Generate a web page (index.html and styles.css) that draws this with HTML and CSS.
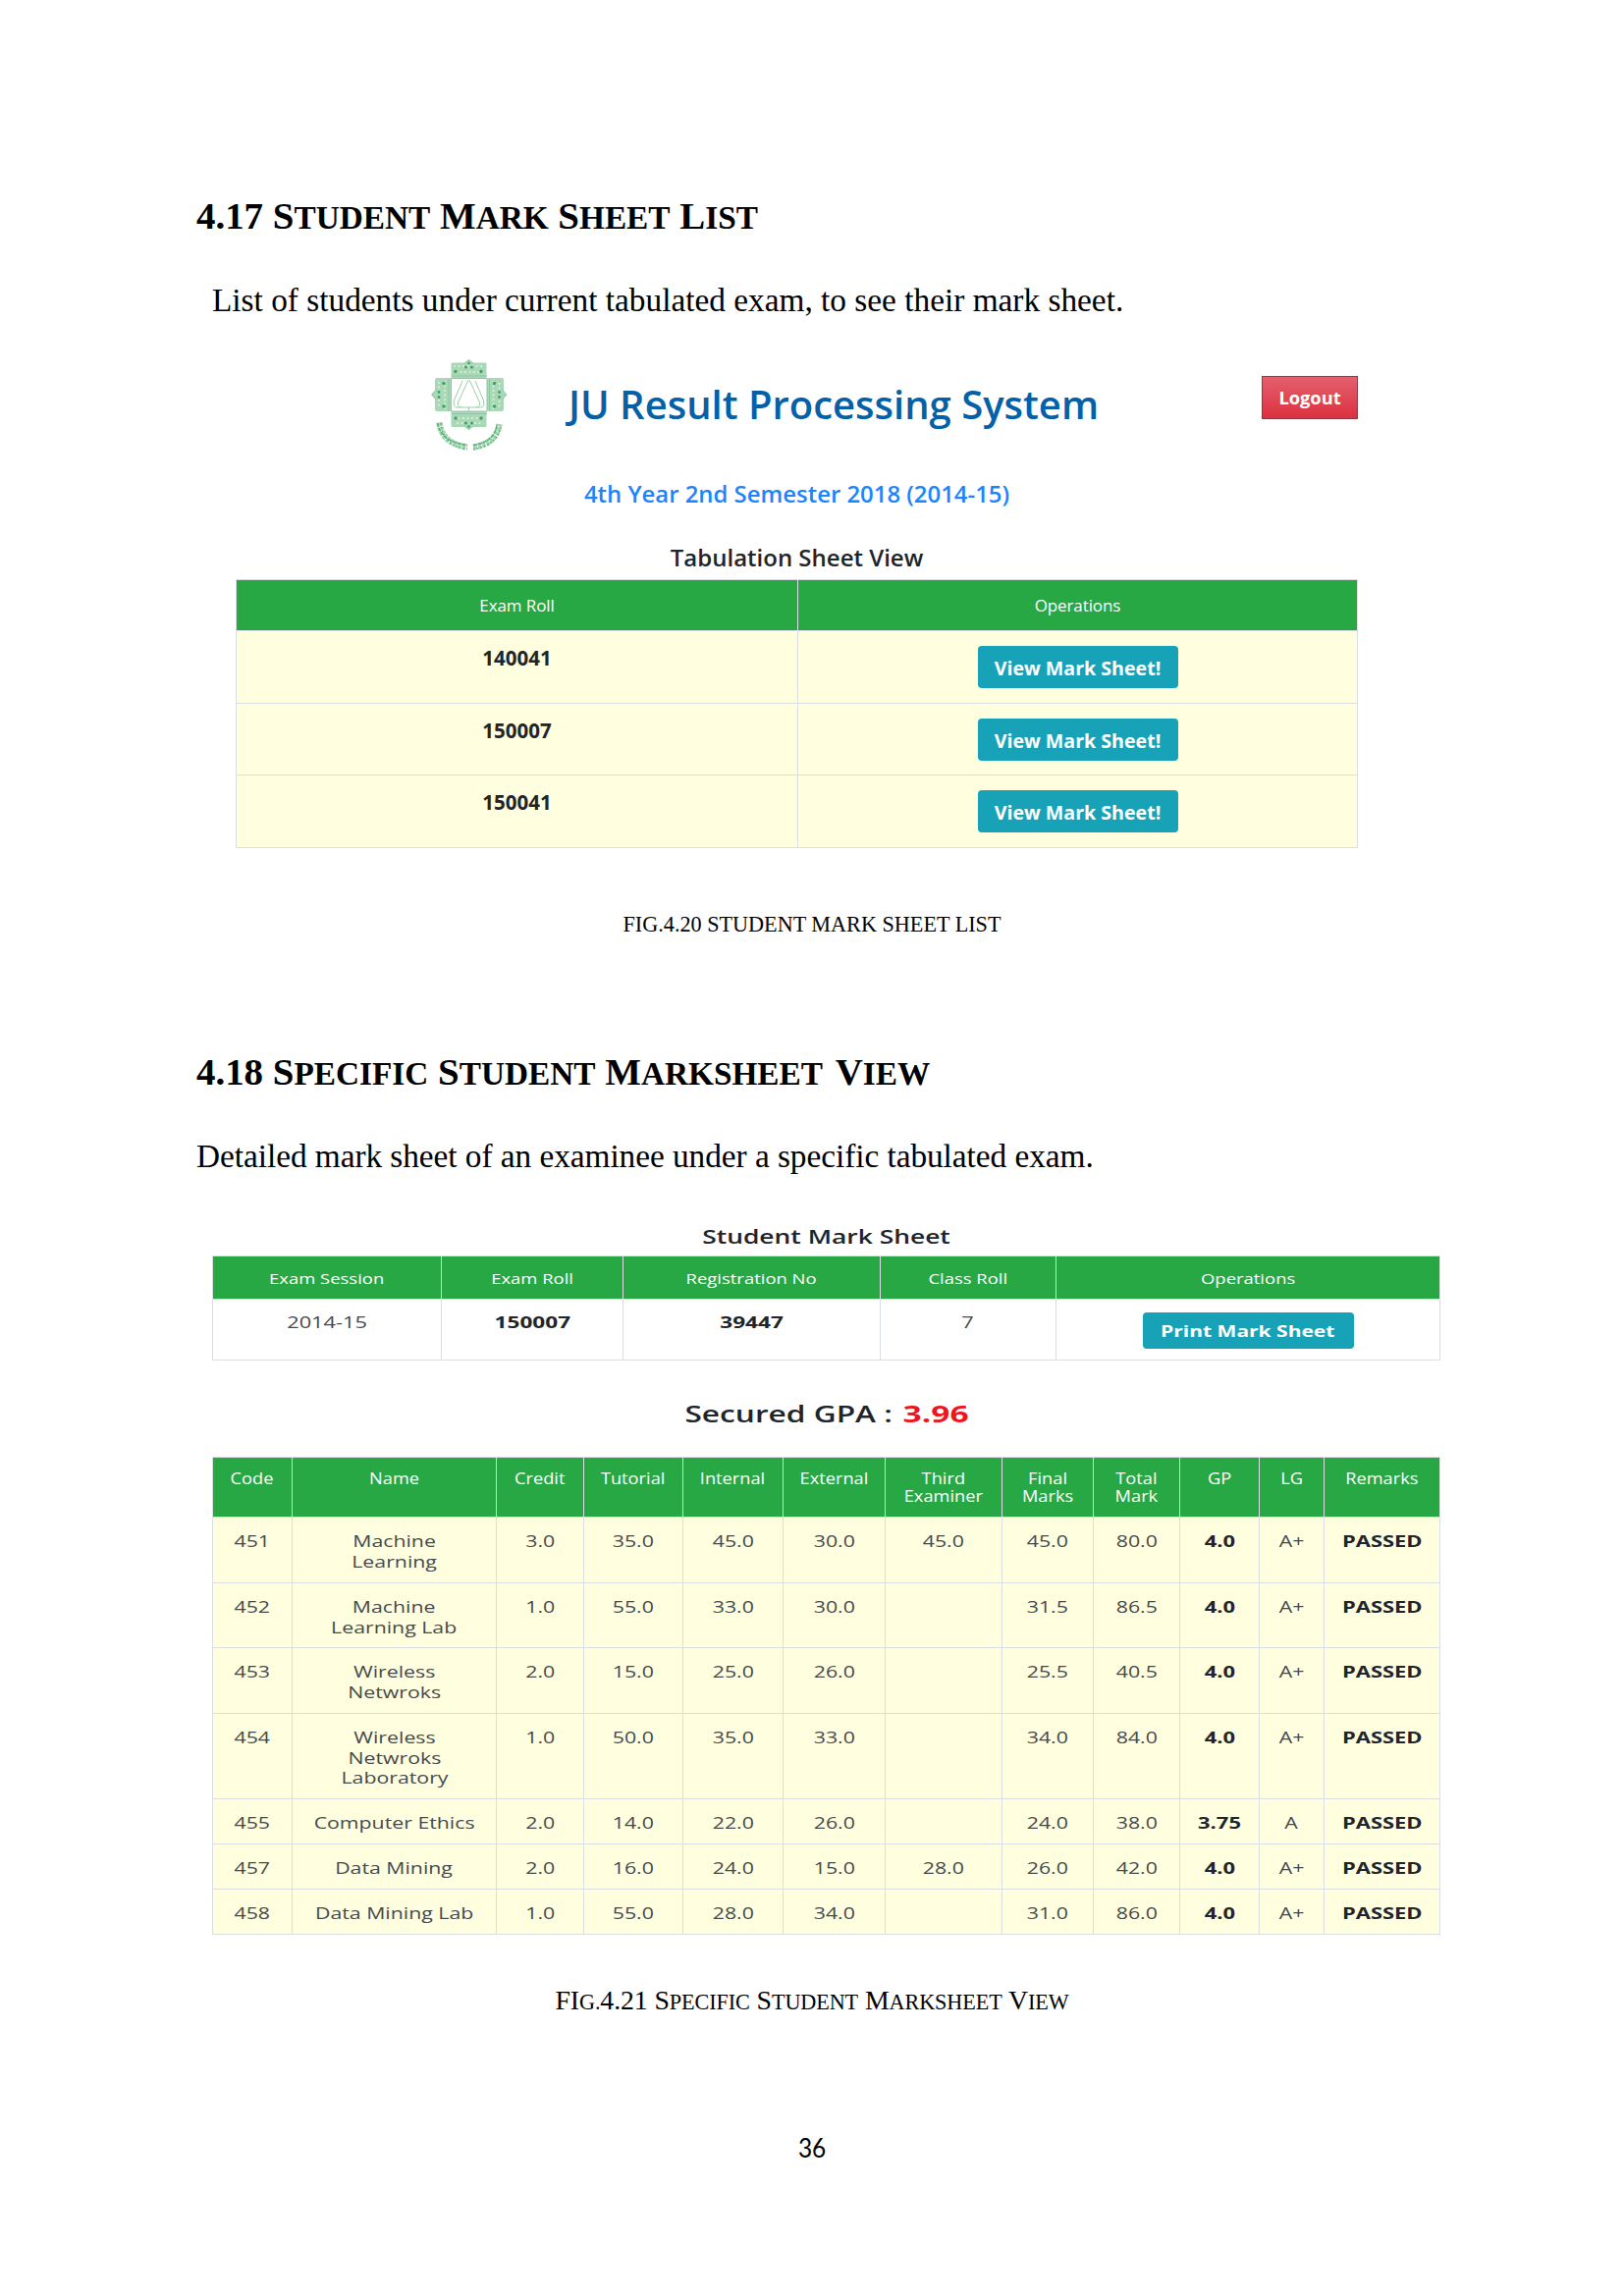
FILE: index.html
```
<!DOCTYPE html>
<html lang="en">
<head>
<meta charset="utf-8">
<title>Student Mark Sheet</title>
<link rel="stylesheet" href="styles.css">
</head>
<body>
<main class="page">
  <h2 class="heading">4.17 S<small>TUDENT</small> M<small>ARK</small> S<small>HEET</small> L<small>IST</small></h2>
  <p class="intro intro-indent">List of students under current tabulated exam, to see their mark sheet.</p>

  <section class="fig fig-list">
    <header class="banner">
      <svg class="logo" viewBox="0 0 78 94" width="78" height="94">
        <g fill="#a9d8b7">
          <rect x="20.5" y="3.5" width="36" height="16" rx="1"/>
          <rect x="20.5" y="53" width="36" height="16" rx="1"/>
          <rect x="4" y="19" width="17" height="34" rx="2"/>
          <rect x="57" y="19" width="17" height="34" rx="2"/>
          <path d="M38.5 0l5 5h-10zM38.5 72l5-5h-10zM0 36l5-5v10zM77.500 36l-5-5v10z"/>
        </g>
        <g fill="none" stroke="#8cc99f" stroke-width="1">
          <path d="M20.500 19.500h36.500v33.500h-36.500zM18 20v33M59.500 20v33M21 17h36M21 55.500h36"/>
          <path d="M5 31l-4 5 4 5M72.500 31l4 5-4 5M34 4l4.500-3.500L43 4M34 68l4.500 3.500L43 68"/>
          <path d="M38.500 53v-4h-9q-3-2-2-5l10-22h2l10 22q1 3-2 5h-9M32 22L23.500 42q-1.500 7 3 7h4M45 22l8.500 20q1.500 7-3 7h-4" stroke-width=".9"/>
        </g>
        <g stroke="#dff1e4" stroke-width="1.500" stroke-dasharray="2 2.500" fill="none">
          <path d="M23 7h31M25 13h28M23 60h31M26 65h26M8 23v27M14 22v29M63.500 22v29M69.500 24v26"/>
        </g>
        <g fill="#3f9f61">
          <circle cx="25" cy="12.500" r="1.700"/><circle cx="51" cy="12.500" r="1.700"/>
          <circle cx="35.500" cy="8" r="1.500"/><circle cx="41.500" cy="8" r="1.500"/><circle cx="38.500" cy="4" r="1.300"/>
          <circle cx="25" cy="60" r="1.700"/><circle cx="51" cy="60" r="1.700"/>
          <circle cx="35.500" cy="65" r="1.500"/><circle cx="41.500" cy="65" r="1.500"/><circle cx="38.500" cy="68.500" r="1.300"/>
          <circle cx="13" cy="24.500" r="1.700"/><circle cx="13" cy="48" r="1.700"/>
          <circle cx="8" cy="33.500" r="1.400"/><circle cx="8" cy="38.500" r="1.400"/>
          <circle cx="64.500" cy="24.500" r="1.700"/><circle cx="64.500" cy="48" r="1.700"/>
          <circle cx="69.500" cy="33.500" r="1.400"/><circle cx="69.500" cy="38.500" r="1.400"/>
        </g>
        <g fill="none">
          <path d="M8.500 64.500Q11 86 37 89.500M43 89.500Q67 86 69.500 66" stroke="#a5d6b4" stroke-width="6.500" stroke-dasharray="3.600 .9"/>
          <path d="M6.500 65Q10 84 37 87.500M43 87.500Q65 84 67 67" stroke="#58ae76" stroke-width="1.400" stroke-dasharray="4 1"/>
          <path d="M10 65Q12 88 37 91.500M43 91.500Q68 88 71 67" stroke="#5fb27b" stroke-width="1.600" stroke-dasharray="1.500 2.200"/>
        </g>
      </svg>
      <h1 class="brand">JU Result Processing System</h1>
      <button class="logout">Logout</button>
    </header>
    <h3 class="exam">4th Year 2nd Semester 2018 (2014-15)</h3>
    <h3 class="list-title">Tabulation Sheet View</h3>
    <table class="grid list">
      <colgroup><col class="w-roll"><col></colgroup>
      <thead><tr><th>Exam Roll</th><th>Operations</th></tr></thead>
      <tbody>
        <tr class="r1"><td>140041</td><td><button class="btn">View Mark Sheet!</button></td></tr>
        <tr class="r2"><td>150007</td><td><button class="btn">View Mark Sheet!</button></td></tr>
        <tr class="r3"><td>150041</td><td><button class="btn">View Mark Sheet!</button></td></tr>
      </tbody>
    </table>
  </section>
  <p class="caption">FIG.4.20 STUDENT MARK SHEET LIST</p>

  <h2 class="heading second">4.18 S<small>PECIFIC</small> S<small>TUDENT</small> M<small>ARKSHEET</small> <span class="wide-gap">V</span><small>IEW</small></h2>
  <p class="intro intro-detail">Detailed mark sheet of an examinee under a specific tabulated exam.</p>

  <section class="fig fig-sheet">
    <h3 class="sheet-title">Student Mark Sheet</h3>
    <table class="grid student">
      <colgroup><col class="s1"><col class="s2"><col class="s3"><col class="s4"><col></colgroup>
      <thead><tr><th><span>Exam Session</span></th><th><span>Exam Roll</span></th><th><span>Registration No</span></th><th><span>Class Roll</span></th><th><span>Operations</span></th></tr></thead>
      <tbody><tr><td><span>2014-15</span></td><td><b>150007</b></td><td><b>39447</b></td><td><span>7</span></td><td><button class="btn print"><span>Print Mark Sheet</span></button></td></tr></tbody>
    </table>
    <h3 class="gpa"><span>Secured GPA :</span><b>3.96</b></h3>
    <table class="grid marks">
      <colgroup><col class="m1"><col class="m2"><col class="m3"><col class="m4"><col class="m5"><col class="m6"><col class="m7"><col class="m8"><col class="m9"><col class="m10"><col class="m11"><col></colgroup>
      <thead><tr><th><span>Code</span></th><th><span>Name</span></th><th><span>Credit</span></th><th><span>Tutorial</span></th><th><span>Internal</span></th><th><span>External</span></th><th><span>Third<br>Examiner</span></th><th><span>Final<br>Marks</span></th><th><span>Total<br>Mark</span></th><th><span>GP</span></th><th><span>LG</span></th><th><span>Remarks</span></th></tr></thead>
      <tbody>
        <tr class="h67"><td><span>451</span></td><td><span>Machine<br>Learning</span></td><td><span>3.0</span></td><td><span>35.0</span></td><td><span>45.0</span></td><td><span>30.0</span></td><td><span>45.0</span></td><td><span>45.0</span></td><td><span>80.0</span></td><td><b>4.0</b></td><td><span>A+</span></td><td><b>PASSED</b></td></tr>
        <tr class="h66"><td><span>452</span></td><td><span>Machine<br>Learning Lab</span></td><td><span>1.0</span></td><td><span>55.0</span></td><td><span>33.0</span></td><td><span>30.0</span></td><td></td><td><span>31.5</span></td><td><span>86.5</span></td><td><b>4.0</b></td><td><span>A+</span></td><td><b>PASSED</b></td></tr>
        <tr class="h67"><td><span>453</span></td><td><span>Wireless<br>Netwroks</span></td><td><span>2.0</span></td><td><span>15.0</span></td><td><span>25.0</span></td><td><span>26.0</span></td><td></td><td><span>25.5</span></td><td><span>40.5</span></td><td><b>4.0</b></td><td><span>A+</span></td><td><b>PASSED</b></td></tr>
        <tr class="h87"><td><span>454</span></td><td><span>Wireless<br>Netwroks<br>Laboratory</span></td><td><span>1.0</span></td><td><span>50.0</span></td><td><span>35.0</span></td><td><span>33.0</span></td><td></td><td><span>34.0</span></td><td><span>84.0</span></td><td><b>4.0</b></td><td><span>A+</span></td><td><b>PASSED</b></td></tr>
        <tr class="h46"><td><span>455</span></td><td><span>Computer Ethics</span></td><td><span>2.0</span></td><td><span>14.0</span></td><td><span>22.0</span></td><td><span>26.0</span></td><td></td><td><span>24.0</span></td><td><span>38.0</span></td><td><b>3.75</b></td><td><span>A</span></td><td><b>PASSED</b></td></tr>
        <tr class="h46"><td><span>457</span></td><td><span>Data Mining</span></td><td><span>2.0</span></td><td><span>16.0</span></td><td><span>24.0</span></td><td><span>15.0</span></td><td><span>28.0</span></td><td><span>26.0</span></td><td><span>42.0</span></td><td><b>4.0</b></td><td><span>A+</span></td><td><b>PASSED</b></td></tr>
        <tr class="h46"><td><span>458</span></td><td><span>Data Mining Lab</span></td><td><span>1.0</span></td><td><span>55.0</span></td><td><span>28.0</span></td><td><span>34.0</span></td><td></td><td><span>31.0</span></td><td><span>86.0</span></td><td><b>4.0</b></td><td><span>A+</span></td><td><b>PASSED</b></td></tr>
      </tbody>
    </table>
  </section>
  <p class="caption caption-caps">FI<small>G.</small>4.21 S<small>PECIFIC</small> S<small>TUDENT</small> M<small>ARKSHEET</small> V<small>IEW</small></p>
  <footer class="folio"><span>36</span></footer>
</main>
</body>
</html>
```
FILE: styles.css
```
* { box-sizing: border-box; margin: 0; padding: 0; }
body { background: #fff; color: #000; font-family: "Liberation Serif", serif; }

.page { display: flow-root; width: 1654px; height: 2339px; padding: 198px 200px 0; }

/* Document text */
.heading { font-size: 38.9px; font-weight: 700; line-height: 44px; height: 44px; white-space: nowrap; }
.heading small { font-size: 33.3px; line-height: 0; }
.heading.second { margin-top: 115px; }
.wide-gap { margin-left: 3px; }
.intro { margin-top: 44px; font-size: 33.33px; line-height: 40px; white-space: nowrap; }
.intro-indent { padding-left: 16px; }
.intro-detail { letter-spacing: -0.05px; }
.caption { margin-top: 65px; height: 26px; font-size: 22.2px; line-height: 26px; text-align: center; }
.caption-caps { margin-top: 51px; height: 32px; font-size: 27.8px; line-height: 32px; letter-spacing: -0.1px; }
.caption-caps small { font-size: 22.2px; line-height: 0; }
.folio { margin-top: 117px; font: 27.8px/34px Lato, sans-serif; text-align: center; }
.folio span { display: inline-block; transform: scaleX(.88); }

/* Application figures */
.fig { font-family: "Open Sans", "Noto Sans", sans-serif; color: #212529; }
.fig h3 { font-weight: 600; text-align: center; white-space: nowrap; }
.fig-list { width: 1143px; margin: 40px 0 0 40px; }
.fig-sheet { width: 1251px; margin: 48px 0 0 16px; }

.banner { display: flex; align-items: flex-start; height: 94px; padding-left: 199px; }
.brand { margin: 16px 0 0 62px; font-size: 40px; font-weight: 600; line-height: 60px; color: #0461a8; white-space: nowrap; }
.logout {
  width: 98px; height: 44px; margin: 17px 0 0 auto;
  border: 1px solid #8c3a44; background: linear-gradient(#e4606d, #dc3040);
  color: #fff; font: 700 18.300px/40px "Open Sans", sans-serif;
}
.fig .exam { margin-top: 26px; font-size: 23.9px; line-height: 34px; color: #1a85ff; }
.fig .list-title { margin-top: 31px; font-size: 24px; line-height: 34px; }

.grid { width: 100%; border-collapse: collapse; table-layout: fixed; text-align: center; }
.grid th, .grid td { border: 1px solid #dadfe4; vertical-align: top; }
.grid th { background: #28a745; color: #fff; font-weight: 400; }
.grid td { background: #ffffe0; }
.btn {
  display: block; width: 204px; height: 43px; margin: 0 auto; padding-top: 2px;
  border: 0; border-radius: 4px; background: #17a2b8; color: #fff;
  font: 700 19.600px/41px "Open Sans", sans-serif;
}

.list { margin-top: 5px; }
.list .w-roll { width: 572px; }
.list th { height: 52px; padding-top: 14px; font-size: 17px; line-height: 24px; letter-spacing: -0.1px; }
.list td { padding-top: 15px; font-size: 20.5px; font-weight: 700; line-height: 24px; }
.list .r1, .list .r3 { height: 74px; }
.list .r2 { height: 73px; }

/* The mark sheet uses wide-set lettering */
.fig-sheet span, .fig-sheet b { display: inline-block; white-space: nowrap; }
.fig .sheet-title { font-size: 20px; line-height: 28px; transform: scaleX(1.32); }
.student { margin-top: 5px; }
.student .s1 { width: 233px; }
.student .s2 { width: 185px; }
.student .s3 { width: 262px; }
.student .s4 { width: 179px; }
.student th { height: 44px; padding-top: 12px; font-size: 15px; line-height: 20px; }
.student th span { transform: scaleX(1.23); }
.student td { height: 62px; padding-top: 13px; background: #fff; font-size: 16px; line-height: 20px; }
.student td > span { transform: scaleX(1.36); color: #45494d; }
.student td b { font-size: 16.500px; transform: scaleX(1.37); }
.print { width: 215px; height: 37px; font-size: 16.300px; line-height: 35px; }
.print span { transform: scaleX(1.29); }

.fig .gpa { display: flex; justify-content: center; gap: 49px; margin-top: 38px; padding-left: 19px; font-size: 23.1px; line-height: 32px; }
.gpa span { transform: scaleX(1.37); }
.gpa b { color: #f0141e; font-weight: 700; transform: scaleX(1.45); }

.marks { margin-top: 28px; }
.marks .m1 { width: 81px; }
.marks .m2 { width: 208px; }
.marks .m3 { width: 89px; }
.marks .m4 { width: 101px; }
.marks .m5 { width: 102px; }
.marks .m6 { width: 104px; }
.marks .m7 { width: 119px; }
.marks .m8 { width: 93px; }
.marks .m9 { width: 88px; }
.marks .m10 { width: 81px; }
.marks .m11 { width: 66px; }
.marks th { height: 61px; padding-top: 13px; font-size: 15.4px; line-height: 18.4px; }
.marks th span { transform: scaleX(1.185); }
.marks td { padding-top: 14px; font-size: 16px; line-height: 20.7px; }
.marks td span { transform: scaleX(1.33); color: #45494d; }
.marks td b { transform: scaleX(1.37); }
.h67 { height: 67px; }
.h66 { height: 66px; }
.h87 { height: 87px; }
.h46 { height: 46px; }
```
